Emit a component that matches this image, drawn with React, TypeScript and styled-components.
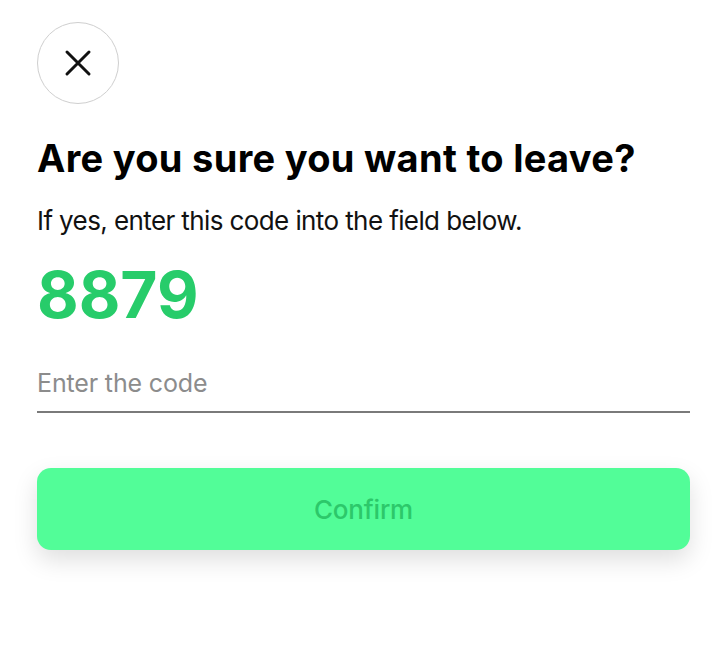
import React from "react";
import styled, { createGlobalStyle } from "styled-components";

const Global = createGlobalStyle`
  html, body { margin: 0; padding: 0; background: #ffffff; }
  body { font-family: Inter, "Noto Sans", "Liberation Sans", sans-serif; }
`;

const Page = styled.div`
  width: 728px;
  height: 650px;
  box-sizing: border-box;
  padding: 22px 38px 0 37px;
  display: flex;
  flex-direction: column;
  background: #fff;
`;

const CloseButton = styled.button`
  width: 82px;
  height: 82px;
  box-sizing: border-box;
  border-radius: 50%;
  border: 1.5px solid #cfcfcf;
  background: #fff;
  display: flex;
  align-items: center;
  justify-content: center;
  padding: 0;
  cursor: pointer;
`;

const Title = styled.h1`
  margin: 31px 0 0 0;
  font-size: 38px;
  font-weight: 700;
  color: #000;
  letter-spacing: 0.3px;
  line-height: 46px;
`;

const Subtitle = styled.p`
  margin: 24px 0 0 0;
  font-size: 26px;
  font-weight: 400;
  color: #111;
  line-height: 32px;
  letter-spacing: -0.6px;
`;

const Code = styled.div`
  margin: 22px 0 0 0;
  font-size: 64px;
  font-weight: 700;
  color: #27cc6a;
  line-height: 72px;
`;

const Field = styled.input`
  margin: 37px 0 0 0;
  border: none;
  border-bottom: 2px solid #7a7a7a;
  padding: 0 0 13px 0;
  font-family: inherit;
  font-size: 25px;
  line-height: 30px;
  height: 30px;
  box-sizing: content-box;
  color: #111;
  outline: none;
  background: transparent;
  letter-spacing: -0.15px;
  &::placeholder { color: #8c8c8c; }
`;

const ConfirmButton = styled.button`
  margin: 55px 0 0 0;
  height: 82px;
  border: none;
  border-radius: 14px;
  background: #52fd98;
  color: #2cc86a;
  font-family: inherit;
  font-size: 26px;
  font-weight: 500;
  letter-spacing: -0.2px;
  box-shadow: 0 10px 24px rgba(0, 0, 0, 0.13);
  cursor: pointer;
`;

export default function App() {
  return (
    <>
      <Global />
      <Page>
        <CloseButton aria-label="Close">
          <svg width="28" height="28" viewBox="0 0 28 28" fill="none" stroke="#111" strokeWidth="3" strokeLinecap="round">
            <path d="M3 3 L25 25 M25 3 L3 25" />
          </svg>
        </CloseButton>
        <Title>Are you sure you want to leave?</Title>
        <Subtitle>If yes, enter this code into the field below.</Subtitle>
        <Code>8879</Code>
        <Field placeholder="Enter the code" />
        <ConfirmButton>Confirm</ConfirmButton>
      </Page>
    </>
  );
}
